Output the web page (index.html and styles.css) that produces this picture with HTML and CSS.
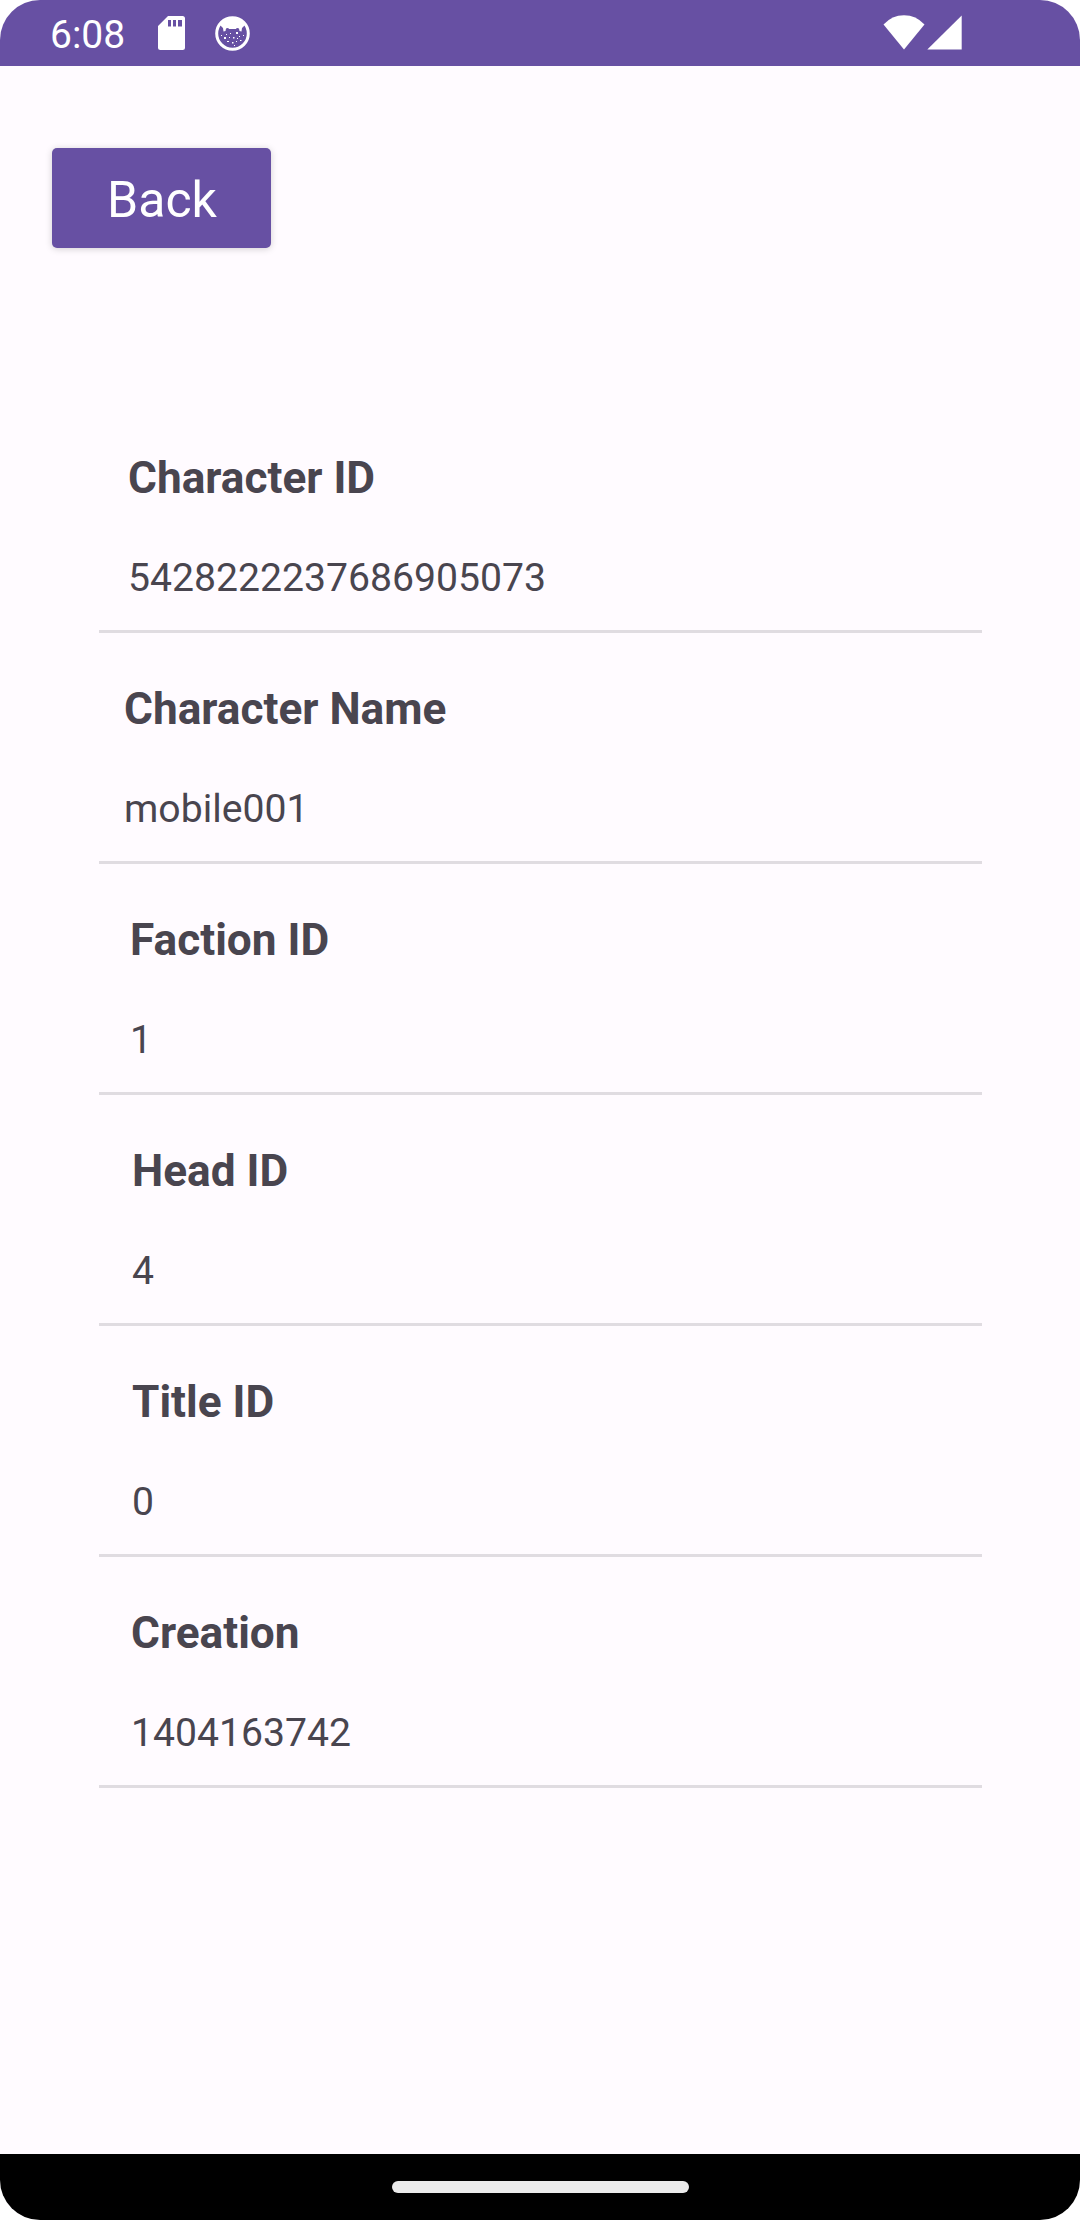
FILE: index.html
```
<!DOCTYPE html>
<html lang="en">
<head>
<meta charset="utf-8">
<title>Character</title>
<link rel="stylesheet" href="styles.css">
</head>
<body>
<div class="screen">
  <header class="status">
    <span class="clock">6:08</span>
    <svg class="sd" viewBox="0 0 27 34" width="27" height="34"><path fill="#fff" fill-rule="evenodd" d="M10 0H24.500Q27 0 27 2.500V31.500Q27 34 24.500 34H2.500Q0 34 0 31.500V10ZM10 4V10.500H13V4ZM15 4V10.500H18V4ZM20 4V10.500H24V4Z"/></svg>
    <svg class="debug" viewBox="0 0 35 35" width="35" height="35">
      <circle cx="17.500" cy="17.500" r="15.800" fill="none" stroke="#fff" stroke-width="3"/>
      <path fill="#fff" d="M5 9Q10 2 17.500 2T30 9L27 12L26.500 15.500L24.500 15L24 12.500Q21.500 11.500 21 13H14Q13.500 11.500 11 12.500L10.500 15L8.500 15.500L8 12Z"/>
      <path fill="#fff" d="M21 16h2v2h-2zM9 21h2v2H9zM15 17h1v1h-1zM18 21h1.500v1.500H18zM24 20h1v1h-1zM25 24h1.500v1H25zM12 25h2v1h-2zM17 26h1.500v1.500H17zM21 25h1v1h-1zM6 19h1v1H6zM19 29h1v1h-1zM11 18h1v1h-1zM14 21h1v1h-1zM28 19h1v1h-1zM22 22h1v1h-1z"/>
    </svg>
    <svg class="wifi" viewBox="0 0 42 35" width="42" height="35"><path fill="#fff" d="M0.500 9.500Q9 0.300 21 0.300T41.500 9.500L21 34.500Z"/></svg>
    <svg class="cell" viewBox="0 0 35 35" width="35" height="35"><path fill="#fff" d="M34.700 0.500V34.500H0.300Z"/></svg>
  </header>
  <main class="content">
    <button class="back">Back</button>
    <dl class="fields">
      <div class="field inset-a"><dt>Character ID</dt><dd>5428222237686905073</dd></div>
      <div class="field inset-b"><dt>Character Name</dt><dd>mobile001</dd></div>
      <div class="field inset-c"><dt>Faction ID</dt><dd>1</dd></div>
      <div class="field inset-d"><dt>Head ID</dt><dd>4</dd></div>
      <div class="field inset-d"><dt>Title ID</dt><dd>0</dd></div>
      <div class="field inset-e"><dt>Creation</dt><dd>1404163742</dd></div>
    </dl>
  </main>
  <footer class="nav"><span class="handle"></span></footer>
</div>
</body>
</html>
```
FILE: styles.css
```
* { box-sizing: border-box; }
body { margin: 0; background: #fff; font-family: Roboto, sans-serif; }
.screen {
  width: 1080px; height: 2220px;
  display: flex; flex-direction: column;
  border-radius: 40px; overflow: hidden;
  background: #fffbff; color: #49454f;
}
.status {
  height: 66px; flex: none;
  display: flex; align-items: flex-start;
  padding: 0 118px 0 50px;
  background: #6750a3; color: #fff;
}
.clock { width: 108px; padding-top: 12px; font-size: 39px; line-height: 46px; }
.sd { margin-top: 16px; }
.debug { margin: 16px 0 0 30px; }
.wifi { margin: 15px 2px 0 auto; }
.cell { margin-top: 15px; }
.content { flex: 1; display: flex; flex-direction: column; align-items: flex-start; padding: 82px 98px 0 52px; }
.back {
  width: 219px; height: 100px; padding: 4px 0 0 1px;
  border: 0; border-radius: 5px;
  background: #6750a3; color: #fff;
  font: 50px/60px Roboto, sans-serif;
  box-shadow: 0 1px 7px rgba(0, 0, 0, .18);
}
.fields { width: 883px; margin: 154px 0 0 47px; }
.field { height: 231px; padding-top: 50px; border-bottom: 3px solid #e0dce1; }
dt { font-size: 44.2px; line-height: 52px; font-weight: 700; }
dd { margin: 51px 0 0; font-size: 39.15px; line-height: 46px; }
.inset-a { padding-left: 29px; }
.inset-b { padding-left: 25px; }
.inset-c { padding-left: 31px; }
.inset-d { padding-left: 33px; }
.inset-e { padding-left: 32px; }
.nav { height: 66px; flex: none; display: flex; justify-content: center; padding-top: 27px; background: #000; }
.handle { width: 297px; height: 12px; border-radius: 6px; background: #ebebeb; }
```
